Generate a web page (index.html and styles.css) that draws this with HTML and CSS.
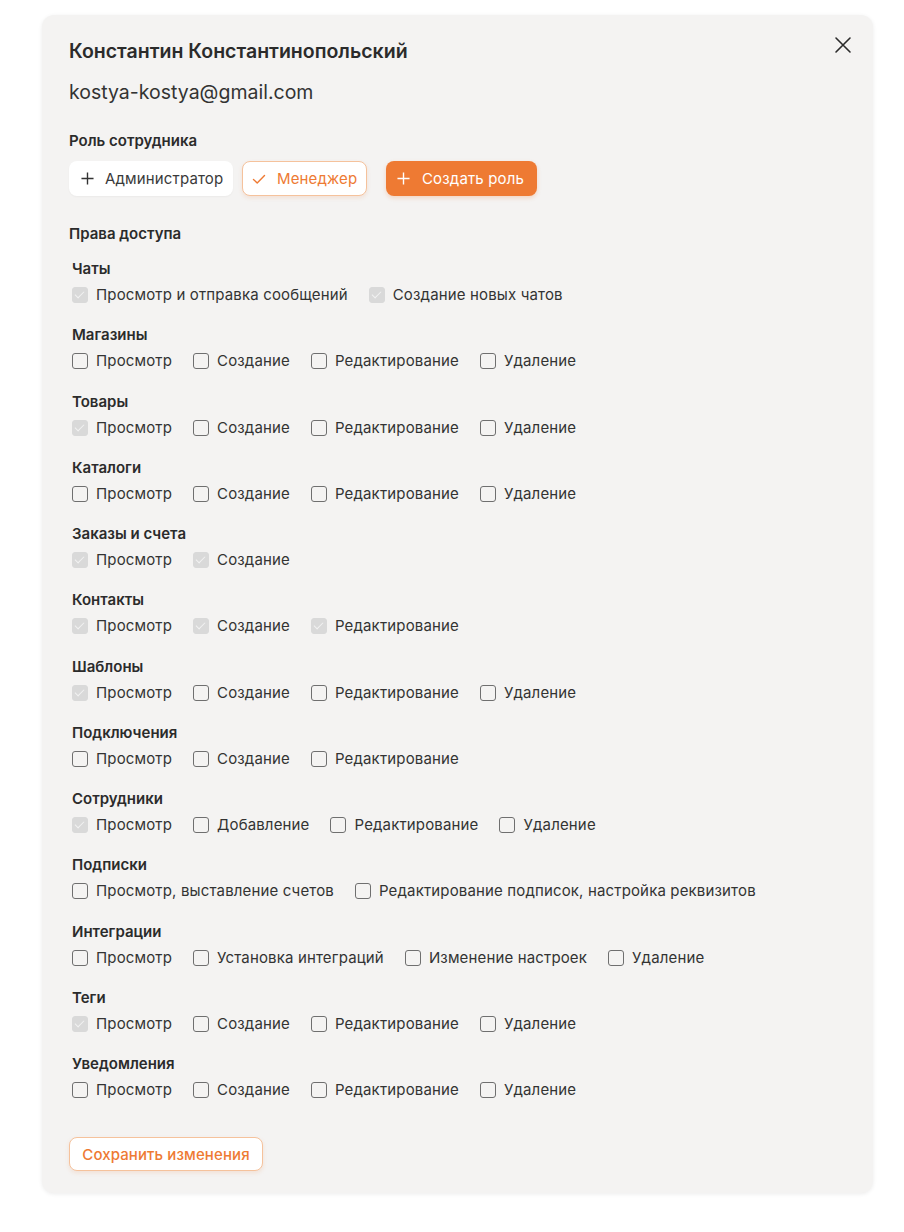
FILE: index.html
```html
<!DOCTYPE html>
<html lang="ru">
<head>
<meta charset="utf-8">
<link rel="stylesheet" href="styles.css">
</head>
<body>
<div class="card">
  <button class="close" aria-label="Закрыть">
    <svg width="18" height="18" viewBox="0 0 18 18"><path d="M2 2L16 16M16 2L2 16" stroke="#2b2b2b" stroke-width="1.6" stroke-linecap="round"/></svg>
  </button>
  <h1 class="name">Константин Константинопольский</h1>
  <div class="email">kostya-kostya@gmail.com</div>

  <h2 class="section-title">Роль сотрудника</h2>
  <div class="roles">
    <button class="role role-plain"><svg width="13" height="13" viewBox="0 0 14 14"><path d="M7 0.5V13.5M0.5 7H13.5" stroke="#333" stroke-width="1.5"/></svg>Администратор</button>
    <button class="role role-active"><svg width="14" height="14" viewBox="0 0 14 14"><path d="M1.5 7.5L5.2 11L12.5 3.5" fill="none" stroke="#ee7a33" stroke-width="1.4" stroke-linecap="round" stroke-linejoin="round"/></svg>Менеджер</button>
    <button class="role role-create"><svg width="13" height="13" viewBox="0 0 14 14"><path d="M7 0.5V13.5M0.5 7H13.5" stroke="#fff" stroke-width="1.5"/></svg>Создать роль</button>
  </div>

  <h2 class="section-title access-title">Права доступа</h2>
  <div class="groups">
    <div class="group"><div class="group-name">Чаты</div><div class="opts">
      <label class="opt"><span class="cb on"></span>Просмотр и отправка сообщений</label>
      <label class="opt"><span class="cb on"></span>Создание новых чатов</label>
    </div></div>
    <div class="group"><div class="group-name">Магазины</div><div class="opts">
      <label class="opt"><span class="cb"></span>Просмотр</label>
      <label class="opt"><span class="cb"></span>Создание</label>
      <label class="opt"><span class="cb"></span>Редактирование</label>
      <label class="opt"><span class="cb"></span>Удаление</label>
    </div></div>
    <div class="group"><div class="group-name">Товары</div><div class="opts">
      <label class="opt"><span class="cb on"></span>Просмотр</label>
      <label class="opt"><span class="cb"></span>Создание</label>
      <label class="opt"><span class="cb"></span>Редактирование</label>
      <label class="opt"><span class="cb"></span>Удаление</label>
    </div></div>
    <div class="group"><div class="group-name">Каталоги</div><div class="opts">
      <label class="opt"><span class="cb"></span>Просмотр</label>
      <label class="opt"><span class="cb"></span>Создание</label>
      <label class="opt"><span class="cb"></span>Редактирование</label>
      <label class="opt"><span class="cb"></span>Удаление</label>
    </div></div>
    <div class="group"><div class="group-name">Заказы и счета</div><div class="opts">
      <label class="opt"><span class="cb on"></span>Просмотр</label>
      <label class="opt"><span class="cb on"></span>Создание</label>
    </div></div>
    <div class="group"><div class="group-name">Контакты</div><div class="opts">
      <label class="opt"><span class="cb on"></span>Просмотр</label>
      <label class="opt"><span class="cb on"></span>Создание</label>
      <label class="opt"><span class="cb on"></span>Редактирование</label>
    </div></div>
    <div class="group"><div class="group-name">Шаблоны</div><div class="opts">
      <label class="opt"><span class="cb on"></span>Просмотр</label>
      <label class="opt"><span class="cb"></span>Создание</label>
      <label class="opt"><span class="cb"></span>Редактирование</label>
      <label class="opt"><span class="cb"></span>Удаление</label>
    </div></div>
    <div class="group"><div class="group-name">Подключения</div><div class="opts">
      <label class="opt"><span class="cb"></span>Просмотр</label>
      <label class="opt"><span class="cb"></span>Создание</label>
      <label class="opt"><span class="cb"></span>Редактирование</label>
    </div></div>
    <div class="group"><div class="group-name">Сотрудники</div><div class="opts">
      <label class="opt"><span class="cb on"></span>Просмотр</label>
      <label class="opt"><span class="cb"></span>Добавление</label>
      <label class="opt"><span class="cb"></span>Редактирование</label>
      <label class="opt"><span class="cb"></span>Удаление</label>
    </div></div>
    <div class="group"><div class="group-name">Подписки</div><div class="opts">
      <label class="opt"><span class="cb"></span>Просмотр, выставление счетов</label>
      <label class="opt"><span class="cb"></span>Редактирование подписок, настройка реквизитов</label>
    </div></div>
    <div class="group"><div class="group-name">Интеграции</div><div class="opts">
      <label class="opt"><span class="cb"></span>Просмотр</label>
      <label class="opt"><span class="cb"></span>Установка интеграций</label>
      <label class="opt"><span class="cb"></span>Изменение настроек</label>
      <label class="opt"><span class="cb"></span>Удаление</label>
    </div></div>
    <div class="group"><div class="group-name">Теги</div><div class="opts">
      <label class="opt"><span class="cb on"></span>Просмотр</label>
      <label class="opt"><span class="cb"></span>Создание</label>
      <label class="opt"><span class="cb"></span>Редактирование</label>
      <label class="opt"><span class="cb"></span>Удаление</label>
    </div></div>
    <div class="group"><div class="group-name">Уведомления</div><div class="opts">
      <label class="opt"><span class="cb"></span>Просмотр</label>
      <label class="opt"><span class="cb"></span>Создание</label>
      <label class="opt"><span class="cb"></span>Редактирование</label>
      <label class="opt"><span class="cb"></span>Удаление</label>
    </div></div>
  </div>

  <button class="save">Сохранить изменения</button>
</div>
</body>
</html>
```

FILE: styles.css
```css
* { box-sizing: border-box; }
html, body { margin: 0; padding: 0; background: #ffffff; }
body {
  font-family: Inter, "Noto Sans", sans-serif;
  color: #2b2b2b;
  padding: 15px 31px 39px 42px;
}
.card {
  position: relative;
  width: 831px;
  background: #f4f3f2;
  border-radius: 12px;
  box-shadow: 0 1px 4px rgba(0, 0, 0, 0.08);
  padding: 24px 27px 22px 27px;
}
.close {
  position: absolute;
  top: 21px;
  right: 21px;
  width: 18px;
  height: 18px;
  padding: 0;
  border: 0;
  background: none;
  display: block;
}
.close svg { display: block; }
.name {
  margin: 0;
  font-size: 19.5px;
  line-height: 24px;
  font-weight: 600;
  color: #2b2b2b;
}
.email {
  margin-top: 17px;
  font-size: 19.5px;
  line-height: 24px;
  color: #333;
}
.section-title {
  margin: 27px 0 0;
  font-size: 15px;
  line-height: 20px;
  font-weight: 600;
  color: #2b2b2b;
}
.roles {
  display: flex;
  margin-top: 10px;
  height: 35px;
}
.role {
  display: flex;
  align-items: center;
  gap: 11px;
  height: 35px;
  border-radius: 8px;
  font-family: inherit;
  font-size: 15px;
  letter-spacing: 0.15px;
  padding: 0 10px 0 11px;
  border: 1px solid transparent;
}
.role svg { flex: none; }
.role-plain {
  background: #fff;
  color: #3a3a3a;
  width: 164px;
  margin-right: 9px;
  box-shadow: 0 1px 2px rgba(0,0,0,0.04);
}
.role-active {
  background: #fff;
  color: #ee7a33;
  border-color: #f5c29c;
  width: 125px;
  padding-left: 9px;
  gap: 11px;
  margin-right: 19px;
  box-shadow: 0 2px 4px rgba(238, 122, 51, 0.15);
}
.role-create {
  background: #ee7a33;
  color: #fff;
  width: 151px;
  padding-left: 10px;
  gap: 12px;
  box-shadow: 0 2px 4px rgba(238, 122, 51, 0.25);
}
.access-title { margin-top: 28px; }
.groups {
  display: flex;
  flex-direction: column;
  gap: 20.25px;
  margin-top: 15px;
  padding-left: 3px;
}
.group-name {
  font-size: 15px;
  line-height: 20px;
  font-weight: 600;
  color: #2b2b2b;
}
.opts {
  display: flex;
  gap: 21px;
  margin-top: 6px;
}
.opt {
  display: flex;
  align-items: center;
  gap: 8px;
  font-size: 15px;
  line-height: 20px;
  letter-spacing: 0.15px;
  color: #333;
}
.cb {
  width: 16px;
  height: 16px;
  border: 1.5px solid #6f6f6f;
  border-radius: 3px;
  flex: none;
  position: relative;
}
.cb.on {
  background: #d9d9d9;
  border-color: #d9d9d9;
}
.cb.on::after {
  content: "";
  position: absolute;
  left: 4px;
  top: 1px;
  width: 4px;
  height: 8px;
  border: solid #f2f2f2;
  border-width: 0 1.5px 1.5px 0;
  transform: rotate(45deg);
}
.save {
  display: block;
  margin-top: 37px;
  height: 34px;
  width: 194px;
  background: #fff;
  color: #ee7a33;
  border: 1px solid #f5c29c;
  border-radius: 8px;
  font-family: inherit;
  font-size: 15px;
  font-weight: 500;
  letter-spacing: 0.1px;
  box-shadow: 0 2px 4px rgba(238, 122, 51, 0.15);
}
```
